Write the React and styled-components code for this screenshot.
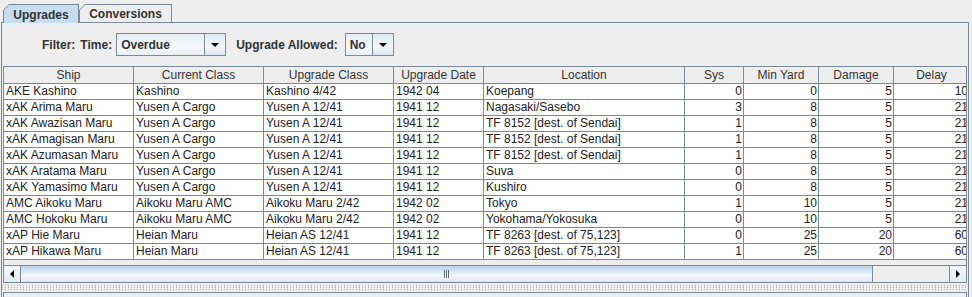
import React from "react";
import styled, { createGlobalStyle } from "styled-components";

const GlobalStyle = createGlobalStyle`
  html, body {
    margin: 0;
    padding: 0;
    background: #eeeeee;
  }
  body {
    font-family: "Liberation Sans", Arial, sans-serif;
    font-size: 12px;
    color: #333333;
  }
`;

const LINE = "#7a8a99";
const SELECTED = "#c8ddf2";

const Frame = styled.div`
  width: 972px;
  height: 297px;
  overflow: hidden;
  box-sizing: border-box;
  padding-top: 4px;
  background: #eeeeee;
`;

const Tabbed = styled.div`
  margin-left: 1px;
  width: 968px;
`;

// Tab strip
const TabStrip = styled.div`
  display: flex;
  align-items: flex-end;
  height: 18px;
  padding-left: 2px;
  border-bottom: 1px solid ${LINE};
`;

const TabEdge = styled.div`
  position: relative;
  width: ${(p) => p.$w}px;
  height: ${(p) => (p.$active ? 19 : 18)}px;
  margin-bottom: ${(p) => (p.$active ? -1 : 0)}px;
  padding: 1px 1px 0 1px;
  box-sizing: border-box;
  background: ${LINE};
  clip-path: polygon(0 6px, 6px 0, 100% 0, 100% 100%, 0 100%);
`;

const TabFace = styled.div`
  height: 100%;
  display: flex;
  align-items: center;
  justify-content: center;
  padding-top: 1px;
  box-sizing: border-box;
  font-weight: bold;
  font-size: 12px;
  color: #333333;
  background: ${(p) => (p.$active ? SELECTED : "#eeeeee")};
  clip-path: polygon(0 5px, 5px 0, 100% 0, 100% 100%, 0 100%);
`;

const TabPanel = styled.div`
  border-left: 1px solid ${LINE};
  border-right: 1px solid ${LINE};
  height: 290px;
`;

// Filter bar
const FilterRow = styled.div`
  display: flex;
  align-items: center;
  height: 43px;
  padding-left: 40px;
`;

const Label = styled.span`
  font-weight: bold;
  font-size: 12px;
  color: #333333;
  margin-right: ${(p) => p.$gap ?? 4}px;
  white-space: nowrap;
`;

const Combo = styled.div`
  display: flex;
  width: ${(p) => p.$w}px;
  height: 23px;
  box-sizing: border-box;
  border: 1px solid ${LINE};
  margin-right: ${(p) => p.$gap ?? 0}px;
  background: linear-gradient(#e4edf6, #f5f8fb 60%, #e9f0f7);
`;

const ComboText = styled.div`
  flex: 1;
  display: flex;
  align-items: center;
  padding-left: 4px;
  font-weight: bold;
  color: #333333;
`;

const ComboButton = styled.div`
  width: 20px;
  display: flex;
  align-items: center;
  justify-content: center;
  border-left: 1px solid ${LINE};
  background: linear-gradient(#dde8f3, #f8fafc 55%, #dce6f1);
`;

const DownArrow = styled.span`
  width: 0;
  height: 0;
  border-left: 4px solid transparent;
  border-right: 4px solid transparent;
  border-top: 4px solid #000000;
`;

// Table
const ScrollPane = styled.div`
  margin: 0 1px;
  height: 217px;
  box-sizing: border-box;
  border: 1px solid ${LINE};
  display: flex;
  flex-direction: column;
`;

const Viewport = styled.div`
  height: 198px;
  overflow: hidden;
  background: #eeeeee;
`;

const COLS = "130px 130px 130px 90px 201px 59px 75px 75px 76px";

const Grid = styled.div`
  display: grid;
  grid-template-columns: ${COLS};
  width: 966px;
`;

const HeadCell = styled.div`
  height: 17px;
  box-sizing: border-box;
  border-right: 1px solid ${LINE};
  border-bottom: 1px solid ${LINE};
  background: #eeeeee;
  color: #333333;
  text-align: center;
  line-height: 16px;
  white-space: nowrap;
  overflow: hidden;
`;

const Cell = styled.div`
  height: 16px;
  box-sizing: border-box;
  border-right: 1px solid ${LINE};
  border-bottom: 1px solid ${LINE};
  background: #ffffff;
  color: #222222;
  padding: 0 ${(p) => (p.$num ? 1 : 0)}px 0 ${(p) => (p.$num ? 0 : 2)}px;
  text-align: ${(p) => (p.$num ? "right" : "left")};
  line-height: 15px;
  white-space: nowrap;
  overflow: hidden;
`;

// Scrollbar
const HScroll = styled.div`
  display: flex;
  height: 17px;
  border-top: 1px solid ${LINE};
  box-sizing: border-box;
  background: #eeeeee;
`;

const ScrollButton = styled.div`
  width: 17px;
  display: flex;
  align-items: center;
  justify-content: center;
  box-sizing: border-box;
  ${(p) => (p.$side === "left" ? `border-right: 1px solid ${LINE};` : `border-left: 1px solid ${LINE};`)}
  background: linear-gradient(#f4f7fa, #e3ebf3);
`;

const SideArrow = styled.span`
  width: 0;
  height: 0;
  border-top: 4px solid transparent;
  border-bottom: 4px solid transparent;
  ${(p) => (p.$dir === "left" ? "border-right: 4px solid #000;" : "border-left: 4px solid #000;")}
`;

const Track = styled.div`
  flex: 1;
  display: flex;
`;

const Thumb = styled.div`
  width: ${(p) => p.$w}px;
  box-sizing: border-box;
  border-right: 1px solid ${LINE};
  display: flex;
  align-items: center;
  justify-content: center;
  background: linear-gradient(#bcd1e7, #dbe7f3 35%, #f6f9fc 60%, #dbe6f2);
`;

const Grip = styled.span`
  width: 5px;
  height: 8px;
  background: repeating-linear-gradient(90deg, #5f6f80 0 1px, transparent 1px 2px);
`;

// Split divider and lower pane
const Divider = styled.div`
  height: 9px;
  display: flex;
  align-items: center;
`;

const Bumps = styled.div`
  flex: 1;
  height: 5px;
  background-image:
    conic-gradient(from 270deg at 1px 1px, #9aaabb 90deg, transparent 0),
    conic-gradient(from 270deg at 1px 1px, #ffffff 90deg, transparent 0);
  background-size: 3px 2px, 3px 2px;
  background-position: 0 0, 1px 1px;
`;

const LowerPane = styled.div`
  margin: 0 1px;
  height: 20px;
  border: 1px solid ${LINE};
  border-bottom: none;
  background: #eeeeee;
`;

const HEADERS = [
  "Ship",
  "Current Class",
  "Upgrade Class",
  "Upgrade Date",
  "Location",
  "Sys",
  "Min Yard",
  "Damage",
  "Delay",
];

const ROWS = [
  ["AKE Kashino", "Kashino", "Kashino 4/42", "1942 04", "Koepang", 0, 0, 5, 10],
  ["xAK Arima Maru", "Yusen A Cargo", "Yusen A 12/41", "1941 12", "Nagasaki/Sasebo", 3, 8, 5, 21],
  ["xAK Awazisan Maru", "Yusen A Cargo", "Yusen A 12/41", "1941 12", "TF 8152 [dest. of Sendai]", 1, 8, 5, 21],
  ["xAK Amagisan Maru", "Yusen A Cargo", "Yusen A 12/41", "1941 12", "TF 8152 [dest. of Sendai]", 1, 8, 5, 21],
  ["xAK Azumasan Maru", "Yusen A Cargo", "Yusen A 12/41", "1941 12", "TF 8152 [dest. of Sendai]", 1, 8, 5, 21],
  ["xAK Aratama Maru", "Yusen A Cargo", "Yusen A 12/41", "1941 12", "Suva", 0, 8, 5, 21],
  ["xAK Yamasimo Maru", "Yusen A Cargo", "Yusen A 12/41", "1941 12", "Kushiro", 0, 8, 5, 21],
  ["AMC Aikoku Maru", "Aikoku Maru AMC", "Aikoku Maru 2/42", "1942 02", "Tokyo", 1, 10, 5, 21],
  ["AMC Hokoku Maru", "Aikoku Maru AMC", "Aikoku Maru 2/42", "1942 02", "Yokohama/Yokosuka", 0, 10, 5, 21],
  ["xAP Hie Maru", "Heian Maru", "Heian AS 12/41", "1941 12", "TF 8263 [dest. of 75,123]", 0, 25, 20, 60],
  ["xAP Hikawa Maru", "Heian Maru", "Heian AS 12/41", "1941 12", "TF 8263 [dest. of 75,123]", 1, 25, 20, 60],
];

const App = () => {
  return (
    <Frame>
      <GlobalStyle />
      <Tabbed>
        <TabStrip>
          <TabEdge $w={76} $active>
            <TabFace $active>Upgrades</TabFace>
          </TabEdge>
          <TabEdge $w={93}>
            <TabFace>Conversions</TabFace>
          </TabEdge>
        </TabStrip>
        <TabPanel>
          <FilterRow>
            <Label $gap={5}>Filter:</Label>
            <Label>Time:</Label>
            <Combo $w={110} $gap={10}>
              <ComboText>Overdue</ComboText>
              <ComboButton>
                <DownArrow />
              </ComboButton>
            </Combo>
            <Label $gap={7}>Upgrade Allowed:</Label>
            <Combo $w={49}>
              <ComboText>No</ComboText>
              <ComboButton>
                <DownArrow />
              </ComboButton>
            </Combo>
          </FilterRow>

          <ScrollPane>
            <Viewport>
              <Grid>
                {HEADERS.map((h) => (
                  <HeadCell key={h}>{h}</HeadCell>
                ))}
                {ROWS.map((row) =>
                  row.map((v, i) => (
                    <Cell key={row[0] + i} $num={i >= 5}>
                      {v}
                    </Cell>
                  ))
                )}
              </Grid>
            </Viewport>
            <HScroll>
              <ScrollButton $side="left">
                <SideArrow $dir="left" />
              </ScrollButton>
              <Track>
                <Thumb $w={852}>
                  <Grip />
                </Thumb>
              </Track>
              <ScrollButton $side="right">
                <SideArrow $dir="right" />
              </ScrollButton>
            </HScroll>
          </ScrollPane>

          <Divider>
            <Bumps />
          </Divider>
          <LowerPane />
        </TabPanel>
      </Tabbed>
    </Frame>
  );
};

export default App;
